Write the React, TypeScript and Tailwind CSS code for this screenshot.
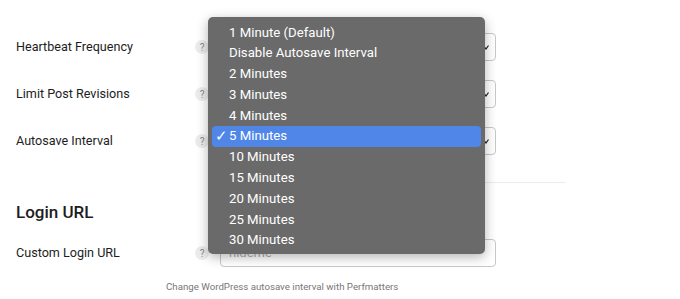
import React from 'react';

const font = { fontFamily: 'Roboto, "Liberation Sans", sans-serif' };

const options = [
  '1 Minute (Default)',
  'Disable Autosave Interval',
  '2 Minutes',
  '3 Minutes',
  '4 Minutes',
  '5 Minutes',
  '10 Minutes',
  '15 Minutes',
  '20 Minutes',
  '25 Minutes',
  '30 Minutes',
];

const HelpIcon = () => (
  <span className="flex h-[14px] w-[14px] items-center justify-center rounded-full bg-[#ececec] text-[10px] text-[#8a8a8a]">
    ?
  </span>
);

const SelectBox = () => (
  <div className="relative h-[28px] w-[276px] rounded-[4px] border border-[#c8c8c8] bg-white">
    <svg
      className="absolute right-[6px] top-[11px]"
      width="6"
      height="5"
      viewBox="0 0 6 5"
    >
      <path d="M0.5 0.5 L3 4 L5.5 0.5" fill="none" stroke="#222" strokeWidth="1.2" />
    </svg>
  </div>
);

const Row = ({
  label,
  children,
}: {
  label: string;
  children: React.ReactNode;
}) => (
  <div className="flex items-center">
    <span className="w-[179px] text-[12.6px] leading-[16px] text-[#1d1d1d]">{label}</span>
    <HelpIcon />
    <span className="ml-[11px]">{children}</span>
  </div>
);

const Dropdown = ({ selected }: { selected: number }) => (
  <div className="absolute left-[208px] top-[17px] h-[237px] w-[277px] rounded-[5px] bg-[#6a6a6a] pt-[5px] shadow-[0_3px_12px_rgba(0,0,0,0.3)]">
    {options.map((opt, i) => (
      <div
        key={opt}
        className={
          i === selected
            ? 'relative mx-[4px] flex h-[20.8px] items-center rounded-[4px] bg-[#4f86e8] pl-[17px] text-[13.2px] text-white'
            : 'relative mx-[4px] flex h-[20.8px] items-center pl-[17px] text-[13.2px] text-white'
        }
      >
        {i === selected && (
          <span className="absolute left-[3px] text-[15px] leading-none">✓</span>
        )}
        {opt}
      </div>
    ))}
  </div>
);

export default function App() {
  return (
    <div className="relative h-[299px] w-[680px] overflow-hidden bg-white" style={font}>
      <div className="flex flex-col pl-[16px] pt-[33px]">
        <Row label="Heartbeat Frequency">
          <SelectBox />
        </Row>
        <div className="mt-[19px]">
          <Row label="Limit Post Revisions">
            <SelectBox />
          </Row>
        </div>
        <div className="mt-[19px]">
          <Row label="Autosave Interval">
            <SelectBox />
          </Row>
        </div>
        <div className="ml-[203px] mt-[27px] h-px w-[347px] bg-[#ececec]" />
        <h2 className="mt-[18px] text-[17px] font-medium leading-[22px] text-[#1d1d1d]">
          Login URL
        </h2>
        <div className="mt-[16px]">
          <Row label="Custom Login URL">
            <div className="flex h-[28px] w-[276px] items-center rounded-[4px] border border-[#c8c8c8] bg-white pl-[8px] text-[13px] text-[#b0b0b0]">
              hideme
            </div>
          </Row>
        </div>
        <p className="ml-[150px] mt-[13px] text-[9.7px] text-[#777]">
          Change WordPress autosave interval with Perfmatters
        </p>
      </div>
      <Dropdown selected={5} />
    </div>
  );
}
